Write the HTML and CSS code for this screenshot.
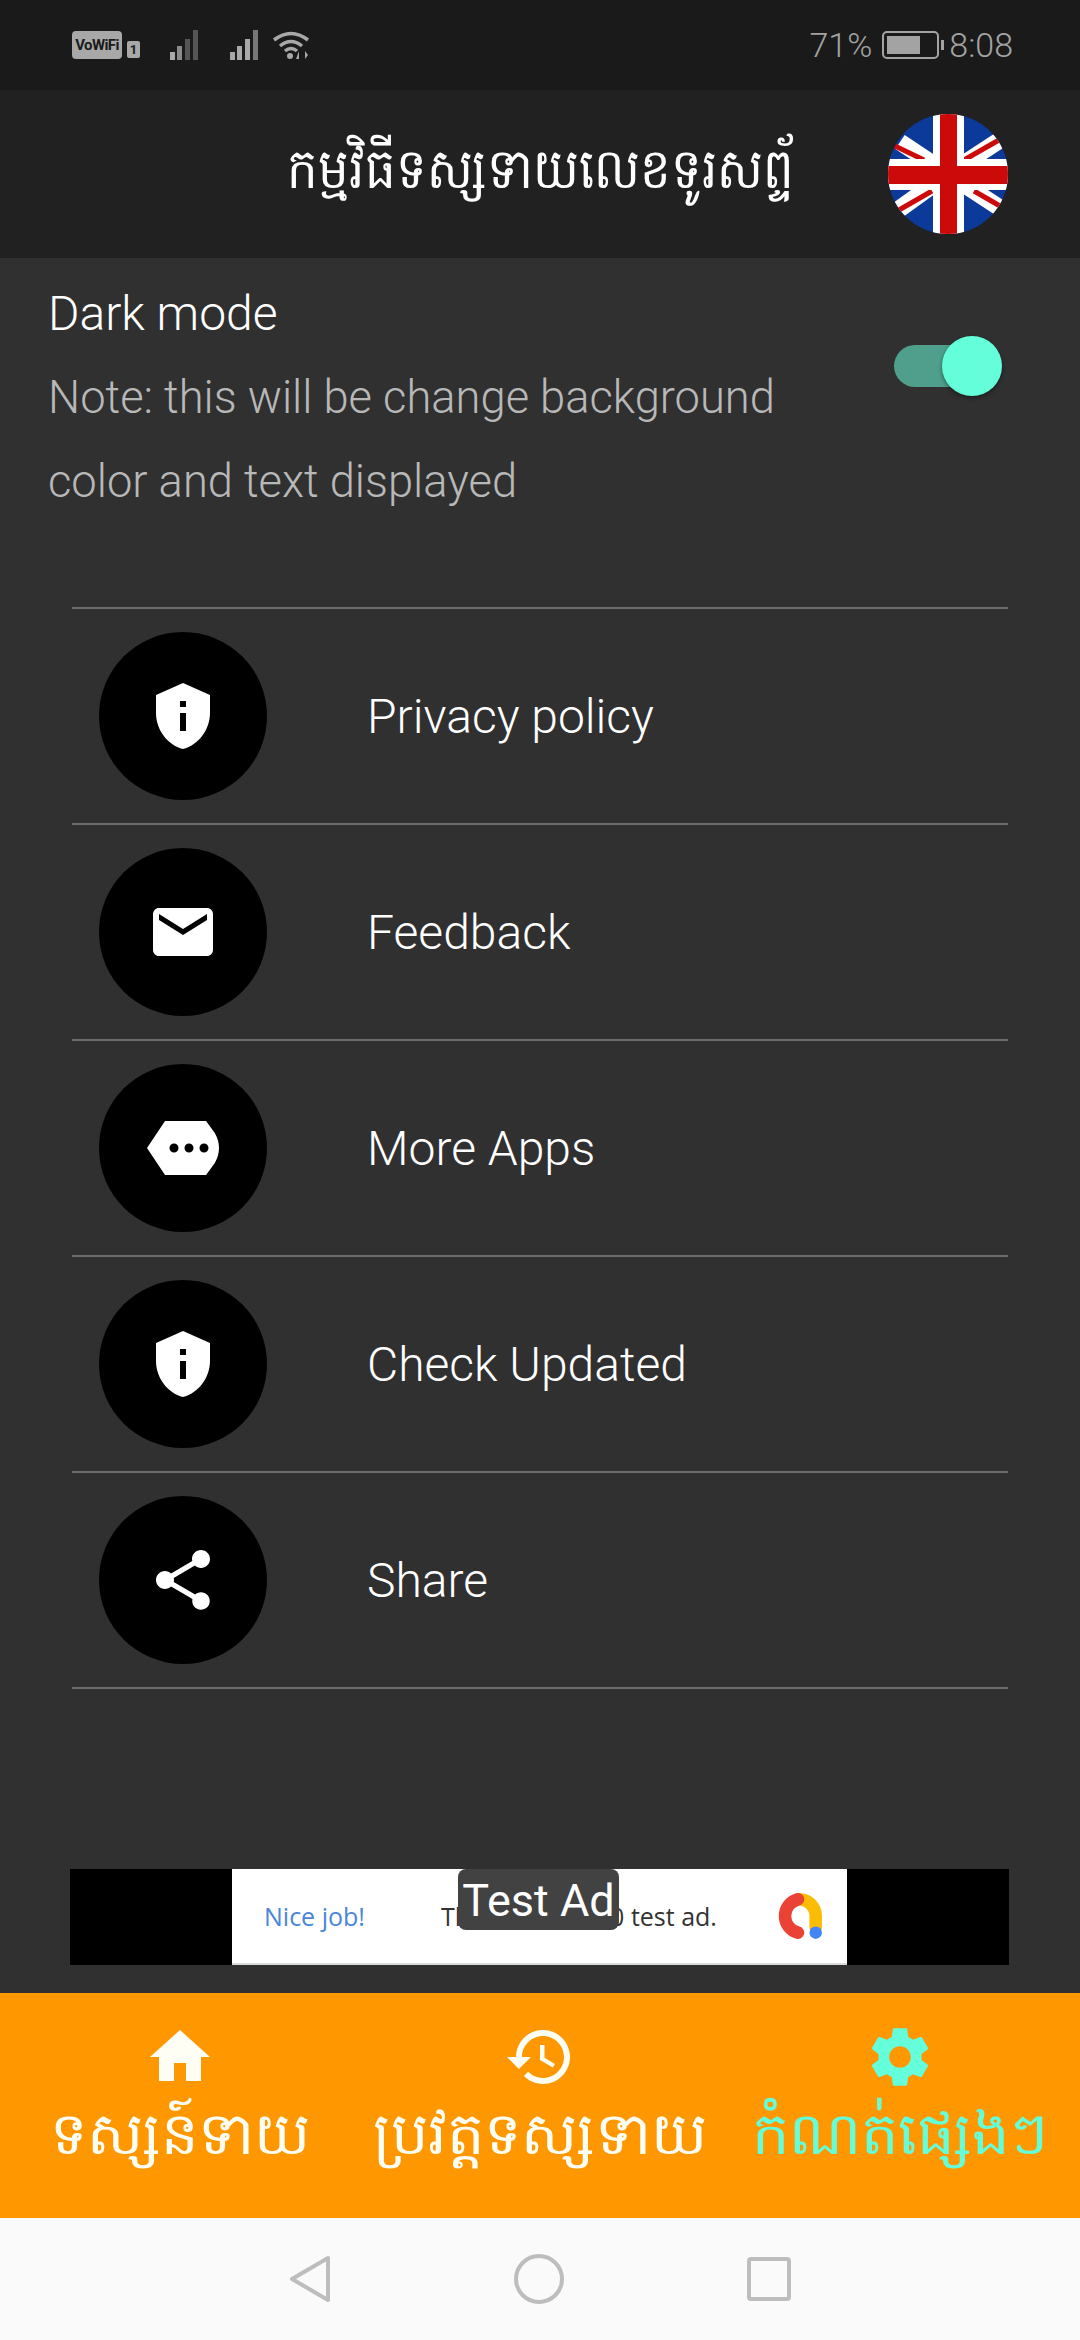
FILE: index.html
```html
<!DOCTYPE html>
<html lang="km">
<head>
  <meta charset="UTF-8" />
  <meta name="viewport" content="width=device-width, initial-scale=1" />
  <title>Settings</title>
  <link rel="stylesheet" href="styles.css">
</head>
<body>
  <div class="status-bar">
    <div class="status-left">
      <span class="vowifi">VoWiFi</span>
      <span class="sim">1</span>
      <svg class="signal" viewBox="0 0 33 30"><rect x="0" y="22" width="5" height="8" fill="#a8a8a8"/><rect x="7" y="16" width="5" height="14" fill="#8a8a8a"/><rect x="15" y="9" width="5" height="21" fill="#555"/><rect x="23" y="0" width="5" height="30" fill="#555"/></svg>
      <svg class="signal" viewBox="0 0 33 30"><rect x="0" y="22" width="5" height="8" fill="#a8a8a8"/><rect x="7" y="16" width="5" height="14" fill="#a8a8a8"/><rect x="15" y="9" width="5" height="21" fill="#a8a8a8"/><rect x="23" y="0" width="5" height="30" fill="#777"/></svg>
      <svg class="wifi" viewBox="0 0 38 28" fill="none" stroke="#a8a8a8" stroke-width="3.500"><path d="M2 9Q19 -4 36 9"/><path d="M8 15Q19 6 30 15"/><path d="M13 20Q19 15 25 20"/><circle cx="18" cy="25" r="3" fill="#a8a8a8" stroke="none"/><path d="M27 20l-3 8h3z M33 28v-8l3 4z" fill="#a8a8a8" stroke="none"/></svg>
    </div>
    <div class="status-right">
      <span>71%</span>
      <span class="battery"><span class="battery-fill"></span></span>
      <span>8:08</span>
    </div>
  </div>

  <header class="app-bar">
    <h1 class="app-title">កម្មវិធីទស្សទាយលេខទូរសព្ទ័</h1>
    <svg class="flag" viewBox="0 0 120 120">
      <defs><clipPath id="flagClip"><circle cx="60" cy="60" r="60"/></clipPath></defs>
      <g clip-path="url(#flagClip)">
        <rect width="120" height="120" fill="#0b3a9b"/>
        <g stroke="#fff" stroke-width="17">
          <line x1="12" y1="28" x2="60" y2="60"/>
          <line x1="112" y1="26" x2="60" y2="60"/>
          <line x1="10" y1="96" x2="60" y2="60"/>
          <line x1="112" y1="94" x2="60" y2="60"/>
        </g>
        <g stroke="#cc0a0a" stroke-width="5">
          <line x1="7" y1="32" x2="36" y2="46"/>
          <line x1="76" y1="46" x2="111" y2="26"/>
          <line x1="11" y1="96" x2="44" y2="77"/>
          <line x1="86" y1="77" x2="112" y2="92"/>
        </g>
        <rect x="45" y="0" width="31" height="120" fill="#fff"/>
        <rect x="0" y="45" width="120" height="31" fill="#fff"/>
        <rect x="52" y="0" width="17" height="120" fill="#cc0a0a"/>
        <rect x="0" y="52" width="120" height="18" fill="#cc0a0a"/>
      </g>
    </svg>
  </header>

  <main class="content">
    <section class="dark-mode">
      <div class="dark-mode-text">
        <div class="dark-mode-title">Dark mode</div>
        <div class="dark-mode-note">Note: this will be change background color and text displayed</div>
      </div>
      <div class="toggle"><span class="toggle-thumb"></span></div>
    </section>

    <ul class="menu">
      <li class="menu-row">
        <span class="menu-icon"><svg viewBox="0 0 24 24"><path d="M12 1L3 5v6c0 5.55 3.84 10.74 9 12 5.16-1.26 9-6.45 9-12V5l-9-4zm-1 6h2v2h-2V7zm0 4h2v6h-2v-6z"/></svg></span>
        <span class="menu-label">Privacy policy</span>
      </li>
      <li class="menu-row">
        <span class="menu-icon"><svg viewBox="0 0 24 24"><path d="M20 4H4c-1.1 0-1.99.9-1.99 2L2 18c0 1.1.9 2 2 2h16c1.1 0 2-.9 2-2V6c0-1.1-.9-2-2-2zm0 4l-8 5-8-5V6l8 5 8-5v2z"/></svg></span>
        <span class="menu-label">Feedback</span>
      </li>
      <li class="menu-row">
        <span class="menu-icon"><svg viewBox="0 0 24 24"><path fill-rule="evenodd" d="M6 3H19.7L22.6 7Q24 9.5 24 12T22.6 17L19.7 21H6L0 12zM9 10.5a1.5 1.5 0 1 0 0 3 1.5 1.5 0 0 0 0-3zM14 10.5a1.5 1.5 0 1 0 0 3 1.5 1.5 0 0 0 0-3zM19 10.5a1.5 1.5 0 1 0 0 3 1.5 1.5 0 0 0 0-3z"/></svg></span>
        <span class="menu-label">More Apps</span>
      </li>
      <li class="menu-row">
        <span class="menu-icon"><svg viewBox="0 0 24 24"><path d="M12 1L3 5v6c0 5.55 3.84 10.74 9 12 5.16-1.26 9-6.45 9-12V5l-9-4zm-1 6h2v2h-2V7zm0 4h2v6h-2v-6z"/></svg></span>
        <span class="menu-label">Check Updated</span>
      </li>
      <li class="menu-row">
        <span class="menu-icon"><svg viewBox="0 0 24 24"><path d="M18 16.08c-.76 0-1.44.3-1.96.77L8.91 12.7c.05-.23.09-.46.09-.7s-.04-.47-.09-.7l7.05-4.11c.54.5 1.25.81 2.04.81 1.66 0 3-1.34 3-3s-1.34-3-3-3-3 1.34-3 3c0 .24.04.47.09.7L8.04 9.81C7.5 9.31 6.79 9 6 9c-1.66 0-3 1.34-3 3s1.34 3 3 3c.79 0 1.5-.31 2.04-.81l7.12 4.16c-.05.21-.08.43-.08.65 0 1.61 1.31 2.92 2.92 2.92 1.61 0 2.92-1.31 2.92-2.92s-1.31-2.92-2.92-2.92z"/></svg></span>
        <span class="menu-label">Share</span>
      </li>
    </ul>

    <div class="ad-banner">
      <div class="ad-inner">
        <span class="ad-nice">Nice job!</span>
        <span class="ad-text">This is a 320x50 test ad.</span>
        <svg class="ad-logo" viewBox="0 0 48 46" fill="none" stroke-width="12" stroke-linecap="round">
          <path d="M24 7A16 16 0 0 1 41 23V34" stroke="#fbbc04"/>
          <path d="M24 7A16.500 16.500 0 0 0 24 39" stroke="#ea4335"/>
          <circle cx="41" cy="39" r="6" fill="#4285f4" stroke="none"/>
        </svg>
      </div>
      <span class="ad-label">Test Ad</span>
    </div>
  </main>

  <nav class="tab-bar">
    <div class="tab">
      <svg class="tab-icon" viewBox="0 0 24 24"><path d="M10 20v-6h4v6h5v-8h3L12 3 2 12h3v8z"/></svg>
      <span class="tab-label">ទស្សន៍ទាយ</span>
    </div>
    <div class="tab">
      <svg class="tab-icon" viewBox="0 0 24 24"><path d="M13 3c-4.970 0-9 4.030-9 9H1l3.890 3.890.07.14L9 12H6c0-3.870 3.130-7 7-7s7 3.130 7 7-3.130 7-7 7c-1.930 0-3.680-.79-4.940-2.060l-1.420 1.420C8.270 19.990 10.510 21 13 21c4.970 0 9-4.030 9-9s-4.030-9-9-9zm-1 5v5l4.280 2.540.72-1.210-3.500-2.080V8H12z"/></svg>
      <span class="tab-label">ប្រវត្តទស្សទាយ</span>
    </div>
    <div class="tab active">
      <svg class="tab-icon" viewBox="0 0 24 24"><path d="M19.14 12.94c.04-.3.06-.61.06-.94 0-.32-.02-.64-.07-.94l2.03-1.58c.18-.14.23-.41.12-.61l-1.92-3.32c-.12-.22-.37-.29-.59-.22l-2.39.96c-.5-.38-1.03-.7-1.62-.94l-.36-2.54c-.04-.24-.24-.41-.48-.41h-3.84c-.24 0-.43.17-.47.41l-.36 2.54c-.59.24-1.13.57-1.62.94l-2.39-.96c-.22-.08-.47 0-.59.22L2.74 8.87c-.12.21-.08.47.12.61l2.03 1.58c-.05.3-.09.63-.09.94s.02.64.07.94l-2.03 1.58c-.18.14-.23.41-.12.61l1.92 3.32c.12.22.37.29.59.22l2.39-.96c.5.38 1.03.7 1.62.94l.36 2.54c.05.24.24.41.48.41h3.84c.24 0 .44-.17.47-.41l.36-2.54c.59-.24 1.13-.56 1.62-.94l2.39.96c.22.08.47 0 .59-.22l1.92-3.32c.12-.22.07-.47-.12-.61l-2.01-1.58zM12 15.6c-1.98 0-3.6-1.62-3.6-3.6s1.62-3.6 3.6-3.6 3.6 1.62 3.6 3.6-1.62 3.6-3.6 3.6z"/></svg>
      <span class="tab-label">កំណត់ផ្សេងៗ</span>
    </div>
  </nav>

  <div class="system-nav">
    <svg class="sys-icon back" viewBox="0 0 42 48"><path d="M39 3V45L3 24z"/></svg>
    <svg class="sys-icon home" viewBox="0 0 50 50"><circle cx="25" cy="25" r="23"/></svg>
    <svg class="sys-icon recent" viewBox="0 0 44 44"><rect x="2" y="2" width="40" height="40" rx="2"/></svg>
  </div>
</body>
</html>
```

FILE: styles.css
```css
:root {
  --bg: #303030;
  --accent: #64ffda;
  --orange: #ff9800;
  --line: #6b6b6b;
}

*, *::before, *::after { box-sizing: border-box; }

body {
  margin: 0;
  width: 1080px;
  height: 2340px;
  overflow: hidden;
  display: flex;
  flex-direction: column;
  background: var(--bg);
  color: #fff;
  font-family: Roboto, "Liberation Sans", sans-serif;
}

/* status bar */
.status-bar {
  height: 90px;
  flex: none;
  background: #1a1a1a;
  display: flex;
  justify-content: space-between;
  align-items: center;
  padding: 0 67px 0 72px;
  color: #a3a3a3;
}

.status-left, .status-right {
  display: flex;
  align-items: center;
}

.vowifi {
  width: 50px;
  height: 28px;
  background: #a8a8a8;
  color: #1a1a1a;
  border-radius: 4px;
  font-size: 15px;
  font-weight: 700;
  line-height: 28px;
  text-align: center;
  letter-spacing: -0.6px;
}

.sim {
  width: 13px;
  height: 17px;
  margin: 8px 0 0 5px;
  background: #a8a8a8;
  color: #1a1a1a;
  border-radius: 2px;
  font-size: 13px;
  font-weight: 700;
  line-height: 17px;
  text-align: center;
}

.signal {
  width: 33px;
  height: 30px;
  margin-left: 30px;
}

.signal + .signal { margin-left: 27px; }

.wifi {
  width: 38px;
  height: 28px;
  margin-left: 9px;
}

.status-right {
  font-size: 34px;
  font-weight: 300;
  gap: 10px;
}

.battery {
  width: 57px;
  height: 28px;
  border: 2px solid #a3a3a3;
  border-radius: 5px;
  padding: 3px;
  position: relative;
}

.battery::after {
  content: "";
  position: absolute;
  right: -7px;
  top: 7px;
  width: 3px;
  height: 10px;
  background: #a3a3a3;
}

.battery-fill {
  display: block;
  width: 70%;
  height: 100%;
  background: #a3a3a3;
}

/* app bar */
.app-bar {
  height: 168px;
  flex: none;
  background: #212121;
  display: grid;
  grid-template-columns: 1fr auto 1fr;
  align-items: center;
  padding: 0 72px;
}

.app-title {
  grid-column: 2;
  margin: 0;
  font-size: 56px;
  font-weight: 400;
  white-space: nowrap;
  transform: scaleX(0.86);
}

.flag {
  grid-column: 3;
  justify-self: end;
  width: 120px;
  height: 120px;
}

/* settings content */
.content {
  flex: 1;
  display: flex;
  flex-direction: column;
  min-height: 0;
}

.dark-mode {
  display: flex;
  justify-content: space-between;
  padding: 14px 105px 0 48px;
  height: 349px;
}

.dark-mode-text {
  width: 760px;
  line-height: 84px;
}

.dark-mode-title {
  font-size: 48px;
  font-weight: 300;
}

.dark-mode-note {
  font-size: 45.3px;
  font-weight: 300;
  color: #b8b8b8;
}

.toggle {
  position: relative;
  width: 81px;
  height: 42px;
  margin-top: 73px;
  border-radius: 21px;
  background: #4f9f8c;
}

.toggle-thumb {
  position: absolute;
  left: 48px;
  top: -9px;
  width: 60px;
  height: 60px;
  border-radius: 50%;
  background: var(--accent);
  box-shadow: 0 2px 4px rgba(0, 0, 0, 0.4);
}

.menu {
  list-style: none;
  margin: 0 72px;
  padding: 0;
  border-top: 2px solid var(--line);
}

.menu-row {
  height: 216px;
  display: flex;
  align-items: center;
  padding-left: 27px;
  border-bottom: 2px solid var(--line);
}

.menu-icon {
  width: 168px;
  height: 168px;
  flex: none;
  border-radius: 50%;
  background: #000;
  display: flex;
  align-items: center;
  justify-content: center;
}

.menu-icon svg {
  width: 72px;
  height: 72px;
  fill: #fff;
}

.menu-label {
  margin-left: 100px;
  font-size: 48px;
  font-weight: 300;
}

/* ad */
.ad-banner {
  position: relative;
  margin: 180px 71px 0 70px;
  height: 96px;
  background: #000;
  display: flex;
  justify-content: center;
}

.ad-inner {
  width: 615px;
  background: #fff;
  display: flex;
  align-items: center;
  padding: 0 24px 0 32px;
  font-family: "Open Sans", Roboto, sans-serif;
  font-size: 25px;
  border-bottom: 2px solid #d8dcdc;
}

.ad-nice {
  color: #4a86d8;
  font-weight: 500;
}

.ad-text {
  margin-left: 76px;
  color: #333;
  white-space: nowrap;
}

.ad-logo {
  width: 50px;
  height: 48px;
  margin-left: auto;
}

.ad-label {
  position: absolute;
  left: 388px;
  top: 0;
  width: 161px;
  height: 61px;
  border-radius: 8px;
  background: #424242;
  font-size: 45px;
  font-weight: 400;
  line-height: 64px;
  text-align: center;
  white-space: nowrap;
}

/* bottom tabs */
.tab-bar {
  height: 225px;
  flex: none;
  background: var(--orange);
  display: grid;
  grid-template-columns: repeat(3, 1fr);
  padding-top: 28px;
}

.tab {
  display: flex;
  flex-direction: column;
  align-items: center;
  color: #fffef5;
}

.tab-icon {
  width: 72px;
  height: 72px;
  fill: currentColor;
}

.tab-label {
  font-size: 59px;
  line-height: 82px;
  white-space: nowrap;
}

.tab.active { color: var(--accent); }

/* system navigation */
.system-nav {
  height: 122px;
  flex: none;
  background: #fafafa;
  display: flex;
  align-items: center;
  justify-content: center;
  gap: 183px;
}

.sys-icon {
  fill: none;
  stroke: #bdbdbd;
  stroke-width: 4;
  stroke-linejoin: round;
}

.back { width: 42px; height: 48px; }
.home { width: 50px; height: 50px; }
.recent { width: 44px; height: 44px; }
```
